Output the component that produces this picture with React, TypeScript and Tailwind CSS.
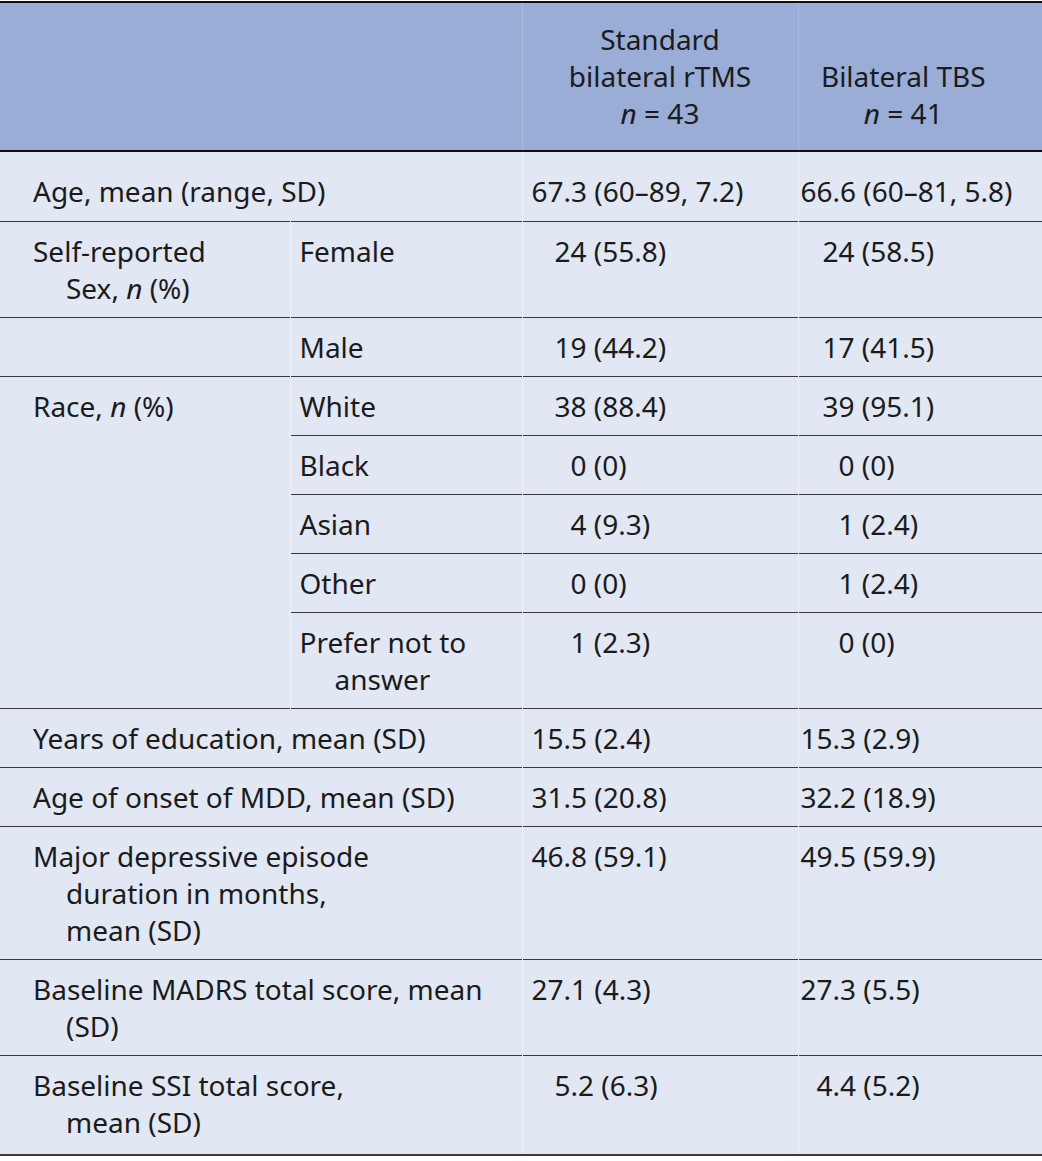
import React from "react";

const N = () => <i>n</i>;

function Lines({ lines, base }: { lines: React.ReactNode[]; base: "c1" | "c2" }) {
  return (
    <>
      {lines.map((l, i) => (
        <div
          key={i}
          className={
            base === "c1"
              ? i === 0
                ? "pl-[33px]"
                : "pl-[66px]"
              : i === 0
                ? "pl-[9px]"
                : "pl-[44px]"
          }
        >
          {l}
        </div>
      ))}
    </>
  );
}

const cellPad = "pt-[11px] pb-[10px] align-top";
const vline = "border-l border-l-[#eef1f8]";
const hline = "border-t border-t-[#3a3a3a]";

export default function App() {
  const race = [
    { sub: ["White"], a: "38 (88.4)", b: "39 (95.1)", pa: "pl-[32px]", pb: "pl-[24px]" },
    { sub: ["Black"], a: "0 (0)", b: "0 (0)", pa: "pl-[48px]", pb: "pl-[40px]" },
    { sub: ["Asian"], a: "4 (9.3)", b: "1 (2.4)", pa: "pl-[48px]", pb: "pl-[40px]" },
    { sub: ["Other"], a: "0 (0)", b: "1 (2.4)", pa: "pl-[48px]", pb: "pl-[40px]" },
    { sub: ["Prefer not to", "answer"], a: "1 (2.3)", b: "0 (0)", pa: "pl-[48px]", pb: "pl-[40px]" },
  ];

  return (
    <div className="w-[1042px] bg-white pt-px" style={{ fontFamily: '"Noto Sans", sans-serif' }}>
      <table className="w-[1042px] table-fixed border-collapse text-[28px] leading-[37px] text-[#1b1b1b]">
        <colgroup>
          <col className="w-[290px]" />
          <col className="w-[232px]" />
          <col className="w-[276px]" />
          <col className="w-[244px]" />
        </colgroup>
        <thead>
          <tr className="bg-[#99add6] border-t-2 border-b-2 border-[#111]">
            <th colSpan={2} className="py-[18px]"></th>
            <th className="border-l border-l-[#a9bbdf] py-[18px] text-center font-normal align-bottom">
              <div>Standard</div>
              <div>bilateral rTMS</div>
              <div>
                <N /> = 43
              </div>
            </th>
            <th className="border-l border-l-[#a9bbdf] py-[18px] pr-[34px] text-center font-normal align-bottom">
              <div>Bilateral TBS</div>
              <div>
                <N /> = 41
              </div>
            </th>
          </tr>
        </thead>
        <tbody className="bg-[#e1e7f3]">
          <tr>
            <td colSpan={2} className="pt-[21px] pb-[11px] align-top">
              <Lines base="c1" lines={["Age, mean (range, SD)"]} />
            </td>
            <td className={`${vline} pt-[21px] pb-[11px] pl-[9px] align-top`}>67.3 (60–89, 7.2)</td>
            <td className={`${vline} pt-[21px] pb-[11px] pl-[2px] align-top`}>66.6 (60–81, 5.8)</td>
          </tr>
          <tr className={hline}>
            <td className={cellPad}>
              <Lines
                base="c1"
                lines={[
                  "Self-reported",
                  <>
                    Sex, <N /> (%)
                  </>,
                ]}
              />
            </td>
            <td className={`${vline} ${cellPad}`}>
              <Lines base="c2" lines={["Female"]} />
            </td>
            <td className={`${vline} ${cellPad} pl-[32px]`}>24 (55.8)</td>
            <td className={`${vline} ${cellPad} pl-[24px]`}>24 (58.5)</td>
          </tr>
          <tr className={hline}>
            <td className={cellPad}></td>
            <td className={`${vline} ${cellPad}`}>
              <Lines base="c2" lines={["Male"]} />
            </td>
            <td className={`${vline} ${cellPad} pl-[32px]`}>19 (44.2)</td>
            <td className={`${vline} ${cellPad} pl-[24px]`}>17 (41.5)</td>
          </tr>
          {race.map((r, i) => (
            <tr key={i} className={hline}>
              {i === 0 && (
                <td rowSpan={race.length} className={cellPad}>
                  <Lines
                    base="c1"
                    lines={[
                      <>
                        Race, <N /> (%)
                      </>,
                    ]}
                  />
                </td>
              )}
              <td className={`${vline} ${cellPad}`}>
                <Lines base="c2" lines={r.sub} />
              </td>
              <td className={`${vline} ${cellPad} ${r.pa}`}>{r.a}</td>
              <td className={`${vline} ${cellPad} ${r.pb}`}>{r.b}</td>
            </tr>
          ))}
          <tr className={hline}>
            <td colSpan={2} className={cellPad}>
              <Lines base="c1" lines={["Years of education, mean (SD)"]} />
            </td>
            <td className={`${vline} ${cellPad} pl-[9px]`}>15.5 (2.4)</td>
            <td className={`${vline} ${cellPad} pl-[2px]`}>15.3 (2.9)</td>
          </tr>
          <tr className={hline}>
            <td colSpan={2} className={cellPad}>
              <Lines base="c1" lines={["Age of onset of MDD, mean (SD)"]} />
            </td>
            <td className={`${vline} ${cellPad} pl-[9px]`}>31.5 (20.8)</td>
            <td className={`${vline} ${cellPad} pl-[2px]`}>32.2 (18.9)</td>
          </tr>
          <tr className={hline}>
            <td colSpan={2} className={cellPad}>
              <Lines
                base="c1"
                lines={["Major depressive episode", "duration in months,", "mean (SD)"]}
              />
            </td>
            <td className={`${vline} ${cellPad} pl-[9px]`}>46.8 (59.1)</td>
            <td className={`${vline} ${cellPad} pl-[2px]`}>49.5 (59.9)</td>
          </tr>
          <tr className={hline}>
            <td colSpan={2} className={cellPad}>
              <Lines base="c1" lines={["Baseline MADRS total score, mean", "(SD)"]} />
            </td>
            <td className={`${vline} ${cellPad} pl-[9px]`}>27.1 (4.3)</td>
            <td className={`${vline} ${cellPad} pl-[2px]`}>27.3 (5.5)</td>
          </tr>
          <tr className={`${hline} border-b-2 border-b-[#3a3a3a]`}>
            <td colSpan={2} className="pt-[11px] pb-[13px] align-top">
              <Lines base="c1" lines={["Baseline SSI total score,", "mean (SD)"]} />
            </td>
            <td className={`${vline} pt-[11px] pb-[13px] pl-[32px] align-top`}>5.2 (6.3)</td>
            <td className={`${vline} pt-[11px] pb-[13px] pl-[18px] align-top`}>4.4 (5.2)</td>
          </tr>
        </tbody>
      </table>
    </div>
  );
}
